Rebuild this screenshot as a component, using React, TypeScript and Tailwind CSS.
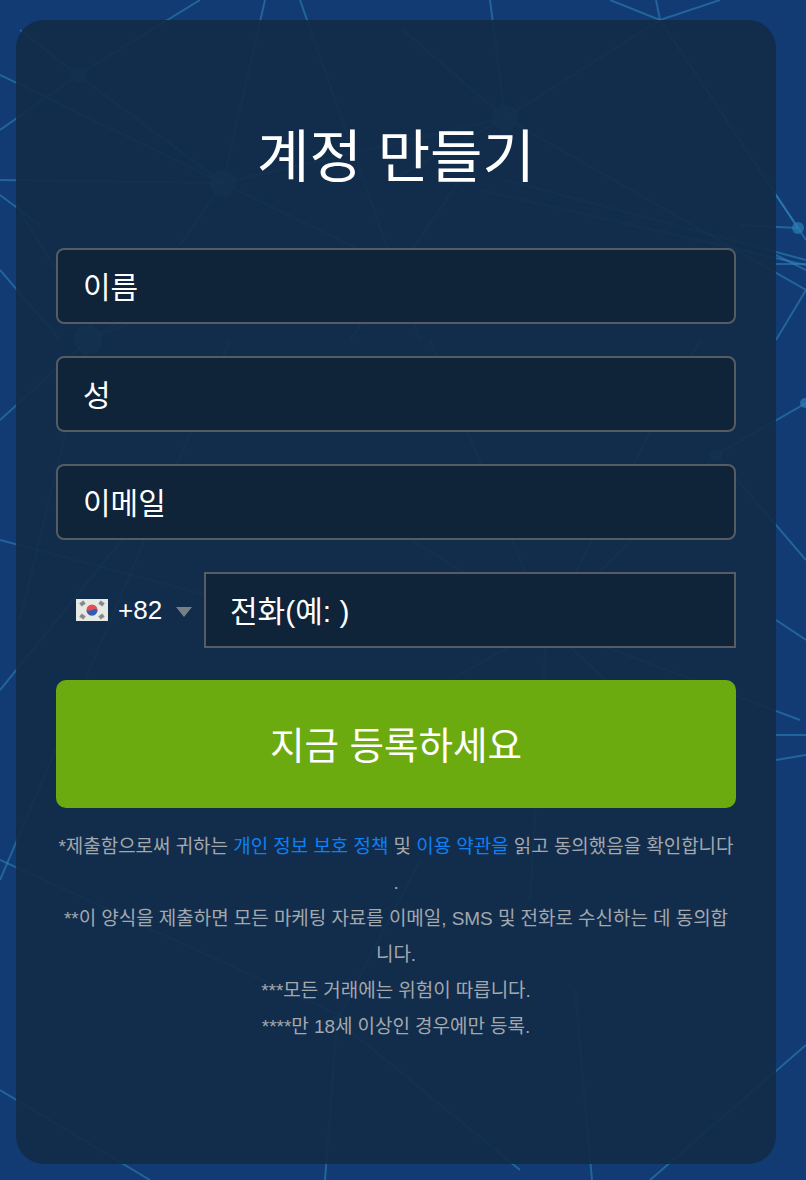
const font = { fontFamily: '"Liberation Sans", "Noto Sans CJK KR", sans-serif' };

const lines: number[][] = [
  [265, 0, 223, 183], [300, 0, 387, 247], [387, 247, 420, 340], [490, 0, 505, 118], [505, 118, 660, 20], [660, 20, 656, 0], [660, 20, 720, 0],
  [660, 20, 806, 240], [610, 0, 660, 20], [505, 118, 806, 290], [403, 30, 505, 118], [505, 118, 400, 175], [505, 118, 223, 183],
  [0, 75, 223, 183], [223, 183, 400, 270], [20, 30, 78, 75], [78, 75, 200, 0], [78, 75, 0, 130], [78, 75, 223, 183], [0, 180, 223, 183],
  [223, 183, 180, 245], [0, 195, 40, 225], [0, 270, 60, 340], [16, 205, 100, 340], [505, 180, 806, 260], [480, 190, 806, 265],
  [798, 228, 776, 195], [776, 255, 806, 270], [776, 264, 806, 264], [806, 290, 776, 340], [798, 228, 740, 225], [460, 180, 350, 340],
  [88, 340, 0, 420], [88, 340, 250, 248], [88, 340, 20, 620], [88, 340, 310, 250], [0, 540, 300, 620], [300, 620, 547, 625],
  [380, 520, 547, 625], [547, 625, 716, 455], [716, 455, 806, 403], [716, 455, 806, 560], [700, 340, 547, 625], [430, 340, 547, 625],
  [547, 625, 530, 900], [547, 625, 800, 720], [547, 625, 380, 720], [547, 625, 680, 750], [0, 690, 130, 530], [230, 340, 0, 880],
  [776, 735, 806, 735], [776, 760, 806, 755], [0, 860, 350, 1020], [337, 1020, 325, 1180], [337, 1020, 520, 1170], [337, 1020, 420, 860],
  [575, 990, 592, 1180], [0, 1090, 150, 1180], [806, 1045, 650, 1180], [776, 620, 806, 640],
];
const nodes: number[][] = [[78, 75, 7], [223, 183, 13], [505, 118, 13], [798, 228, 6], [88, 340, 14], [805, 403, 5], [716, 455, 6], [547, 625, 14], [380, 520, 5], [337, 1020, 5]];

function Flag() {
  return (
    <svg width="32" height="22" viewBox="0 0 32 22" className="shrink-0">
      <rect width="32" height="22" fill="#e6eae4" />
      <circle cx="16" cy="11" r="5.500" fill="#e94b55" />
      <path d="M10.500 11a5.500 5.500 0 0 0 11 0c-1.400-1.600-3.500-1-5.500 0s-4 1.200-5.500 0z" fill="#2a5fb5" />
      <g fill="#85898a">
        <rect x="4" y="2.500" width="5" height="4" transform="rotate(-35 6.500 4.500)" />
        <rect x="23" y="2.500" width="5" height="4" transform="rotate(35 25.500 4.500)" />
        <rect x="4" y="15.500" width="5" height="4" transform="rotate(35 6.500 17.500)" />
        <rect x="23" y="15.500" width="5" height="4" transform="rotate(-35 25.500 17.500)" />
      </g>
    </svg>
  );
}

function Field({ placeholder }: { placeholder: string }) {
  return (
    <input
      placeholder={placeholder}
      style={font}
      className="h-[76px] w-full rounded-lg border-2 border-[#565c64] bg-[#0f2339] px-[25px] pt-1 text-[30px] text-white outline-none placeholder:text-white placeholder:opacity-100"
    />
  );
}

export default function App() {
  return (
    <div style={font} className="relative h-[1180px] w-[806px] overflow-hidden bg-[#123a75] px-4 py-5">
      <svg width="806" height="1180" className="absolute left-0 top-0">
        <rect width="806" height="1180" fill="#123a73" />
        {lines.map((l, i) => (
          <line key={i} x1={l[0]} y1={l[1]} x2={l[2]} y2={l[3]} stroke="#2f86bd" strokeWidth="2" strokeOpacity="0.55" />
        ))}
        {nodes.map((n, i) => (
          <circle key={i} cx={n[0]} cy={n[1]} r={n[2]} fill="#2a7fb5" fillOpacity="0.7" />
        ))}
      </svg>
      <main className="relative flex h-[1144px] w-[760px] flex-col rounded-[28px] bg-[#122c48ec] px-10 pt-[100px]">
        <h1 className="mb-[54px] text-center text-[57px] font-normal leading-[74px] text-white">계정 만들기</h1>
        <form className="flex flex-col gap-8">
          <Field placeholder="이름" />
          <Field placeholder="성" />
          <Field placeholder="이메일" />
          <div className="flex h-[76px] items-center">
            <div className="flex w-[148px] shrink-0 items-center pl-5">
              <Flag />
              <span className="ml-[10px] text-[26px] text-white">+82</span>
              <span className="ml-[14px] mt-1 h-0 w-0 border-x-8 border-t-[10px] border-x-transparent border-t-[#777f87]" />
            </div>
            <input
              placeholder="전화(예: )"
              style={font}
              className="h-[76px] min-w-0 flex-1 border-2 border-[#565c64] bg-[#0f2339] px-6 pt-1 text-[30px] text-white outline-none placeholder:text-white placeholder:opacity-100"
            />
          </div>
          <button type="button" style={font} className="h-32 rounded-[10px] bg-[#6cab0f] pt-1 text-[37.5px] text-white">
            지금 등록하세요
          </button>
        </form>
        <div className="mt-[21px] text-center text-[19px] leading-9 tracking-[-0.05px] text-[#a3a8ae]">
          <p className="whitespace-nowrap">
            *제출함으로써 귀하는 <a className="text-[#0d80f2]">개인 정보 보호 정책</a> 및 <a className="text-[#0d80f2]">이용 약관을</a> 읽고 동의했음을 확인합니다
          </p>
          <p>.</p>
          <p className="whitespace-nowrap">**이 양식을 제출하면 모든 마케팅 자료를 이메일, SMS 및 전화로 수신하는 데 동의합</p>
          <p>니다.</p>
          <p>***모든 거래에는 위험이 따릅니다.</p>
          <p>****만 18세 이상인 경우에만 등록.</p>
        </div>
      </main>
    </div>
  );
}
